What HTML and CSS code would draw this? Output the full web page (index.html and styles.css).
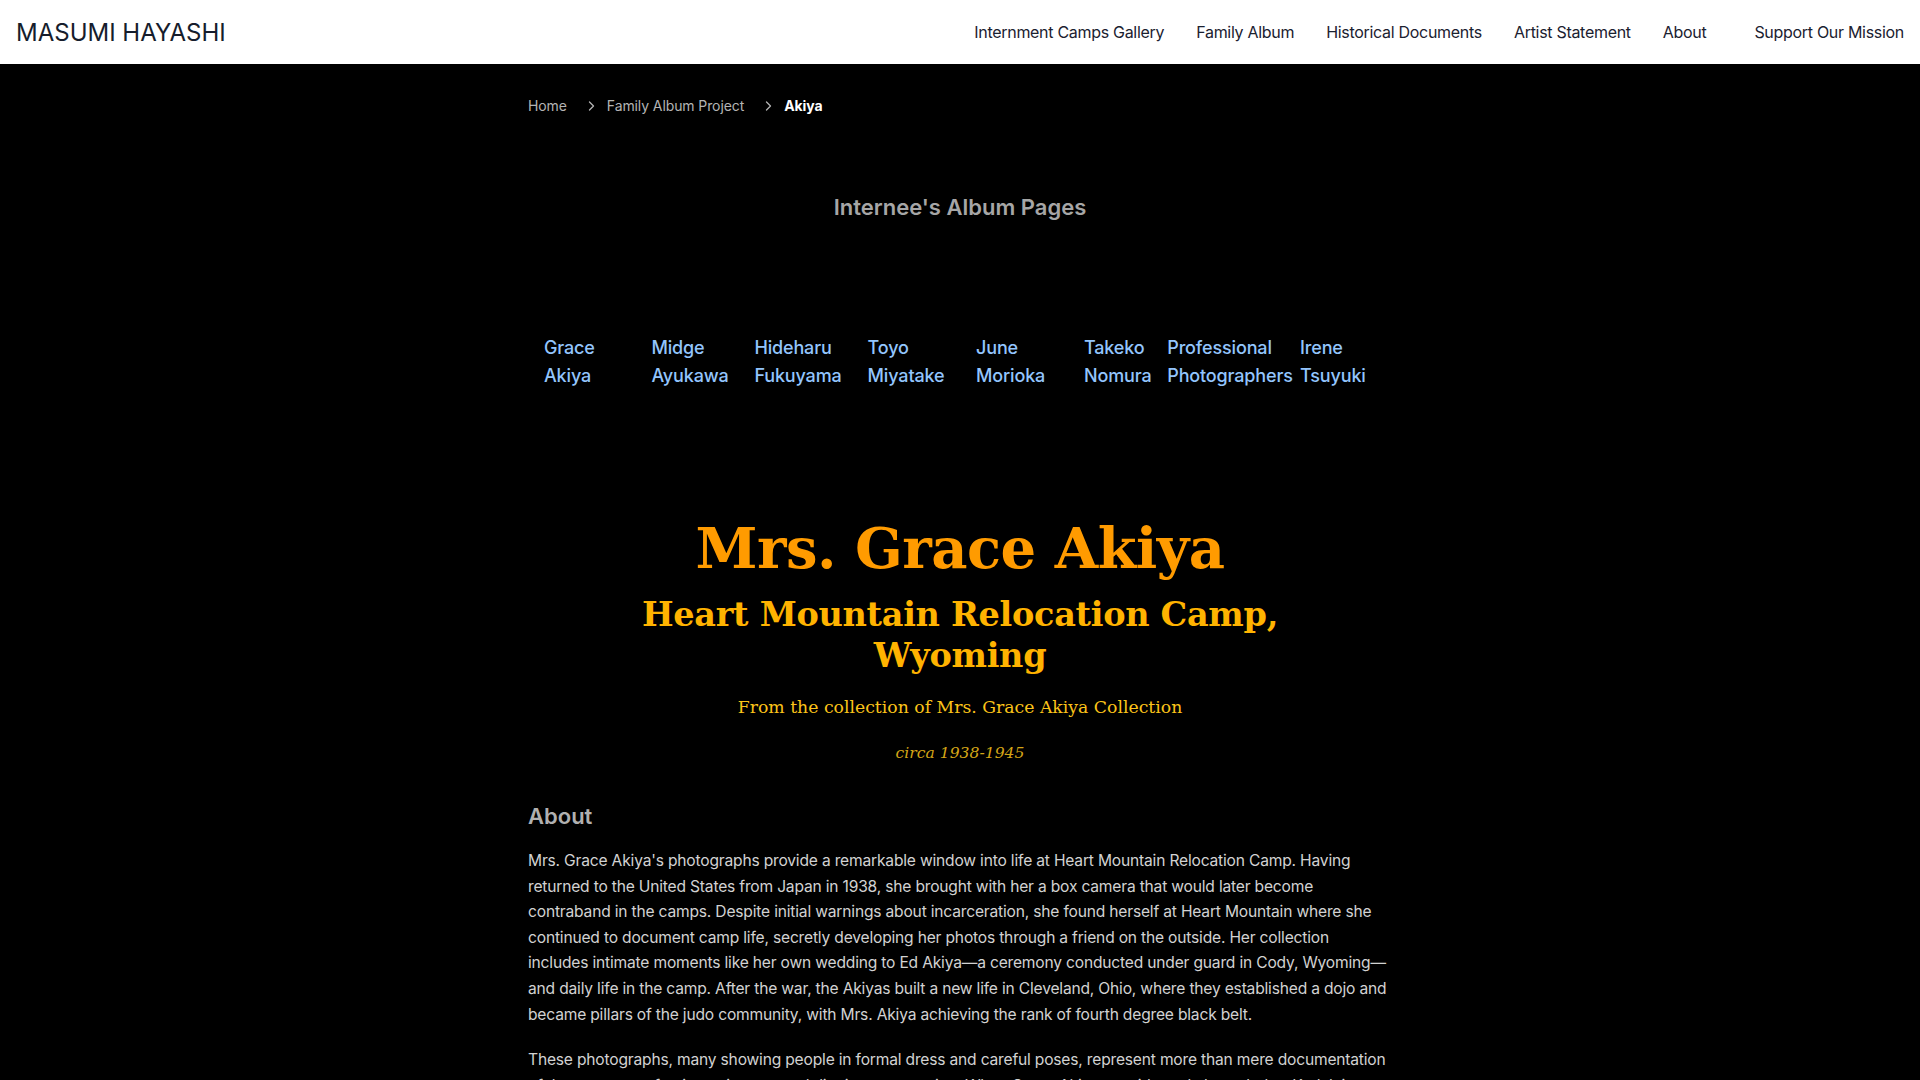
FILE: index.html
```html
<!DOCTYPE html>
<html lang="en">
<head>
<meta charset="utf-8">
<title>Akiya – Family Album Project – Masumi Hayashi</title>
<link rel="stylesheet" href="styles.css">
</head>
<body>
<header class="site-header">
  <a class="logo" href="#">MASUMI HAYASHI</a>
  <nav class="main-nav">
    <a href="#">Internment Camps Gallery</a>
    <a href="#">Family Album</a>
    <a href="#">Historical Documents</a>
    <a href="#">Artist Statement</a>
    <a href="#">About</a>
    <a href="#" class="support">Support Our Mission</a>
  </nav>
</header>

<main class="page">
  <ol class="breadcrumb">
    <li><a href="#">Home</a></li>
    <li class="sep"><svg viewBox="0 0 16 16" width="16" height="16"><path d="M6.5 4l4 4-4 4" fill="none" stroke="#b4b4b4" stroke-width="1.3" stroke-linecap="round" stroke-linejoin="round"/></svg></li>
    <li><a href="#">Family Album Project</a></li>
    <li class="sep"><svg viewBox="0 0 16 16" width="16" height="16"><path d="M6.5 4l4 4-4 4" fill="none" stroke="#b4b4b4" stroke-width="1.3" stroke-linecap="round" stroke-linejoin="round"/></svg></li>
    <li class="current">Akiya</li>
  </ol>

  <section class="album-pages">
    <h2 class="section-title">Internee's Album Pages</h2>
    <div class="names">
      <div class="cell"><a href="#">Grace Akiya</a></div>
      <div class="cell"><a href="#">Midge Ayukawa</a></div>
      <div class="cell"><a href="#">Hideharu Fukuyama</a></div>
      <div class="cell"><a href="#">Toyo Miyatake</a></div>
      <div class="cell"><a href="#">June Morioka</a></div>
      <div class="cell"><a href="#">Takeko Nomura</a></div>
      <div class="cell"><a href="#">Professional Photographers</a></div>
      <div class="cell"><a href="#">Irene Tsuyuki</a></div>
    </div>
  </section>

  <section class="hero">
    <h1 class="hero-name">Mrs. Grace Akiya</h1>
    <h2 class="hero-camp">Heart Mountain Relocation Camp, Wyoming</h2>
    <p class="hero-collection">From the collection of Mrs. Grace Akiya Collection</p>
    <p class="hero-date">circa 1938-1945</p>
  </section>

  <section class="about">
    <h3 class="about-title">About</h3>
    <p>Mrs. Grace Akiya's photographs provide a remarkable window into life at Heart Mountain Relocation Camp. Having returned to the United States from Japan in 1938, she brought with her a box camera that would later become contraband in the camps. Despite initial warnings about incarceration, she found herself at Heart Mountain where she continued to document camp life, secretly developing her photos through a friend on the outside. Her collection includes intimate moments like her own wedding to Ed Akiya—a ceremony conducted under guard in Cody, Wyoming—and daily life in the camp. After the war, the Akiyas built a new life in Cleveland, Ohio, where they established a dojo and became pillars of the judo community, with Mrs. Akiya achieving the rank of fourth degree black belt.</p>
    <p>These photographs, many showing people in formal dress and careful poses, represent more than mere documentation of the moments of quiet resistance and dignity preservation. When Grace Akiya considerately brought her Kodak into the camp, she preserved a record of community life that would otherwise have been lost.</p>
  </section>
</main>
</body>
</html>
```

FILE: styles.css
```css
* { box-sizing: border-box; }
html, body { margin: 0; padding: 0; }
body {
  background: #000;
  font-family: Inter, "Noto Sans", "Liberation Sans", sans-serif;
  color: #d4d4d4;
}
a { text-decoration: none; color: inherit; }

.site-header {
  height: 64px;
  background: #fff;
  display: flex;
  align-items: center;
  justify-content: space-between;
  padding: 0 16px;
}
.logo {
  font-size: 24px;
  color: #161d2c;
  letter-spacing: 0;
}
.main-nav {
  display: flex;
  align-items: center;
  gap: 32px;
}
.main-nav a {
  font-size: 16px;
  color: #1b2130;
  letter-spacing: -0.3px;
}
.main-nav .support { margin-left: 16px; }

.page {
  max-width: 896px;
  margin: 0 auto;
  padding: 32px 16px 40px;
}

.breadcrumb {
  list-style: none;
  margin: 0;
  padding: 0;
  display: flex;
  align-items: center;
  font-size: 14px;
  line-height: 20px;
  color: #b4b4b4;
  letter-spacing: -0.1px;
}
.breadcrumb .sep {
  display: flex;
  margin: 0 8px 0 16px;
}
.breadcrumb .current { color: #fff; font-weight: 700; }

.album-pages { margin-top: 77px; }
.section-title {
  margin: 0;
  text-align: center;
  font-size: 22px;
  line-height: 28px;
  font-weight: 600;
  color: #a6a6a6;
}
.names {
  margin-top: 113px;
  display: grid;
  grid-template-columns: repeat(8, minmax(0, 1fr));
}
.cell {
  display: flex;
  justify-content: center;
  padding: 0 16px;
}
.cell a {
  font-size: 18px;
  line-height: 28px;
  font-weight: 500;
  color: #93c5fd;
  letter-spacing: -0.15px;
}

.hero {
  text-align: center;
  margin-top: 130px;
  font-family: "DejaVu Serif", Georgia, serif;
}
.hero-name {
  margin: 0;
  font-size: 56px;
  line-height: 57px;
  font-weight: 700;
  color: #ff9b00;
  letter-spacing: -0.5px;
}
.hero-camp {
  margin: 17px auto 0;
  max-width: 672px;
  font-size: 33.5px;
  line-height: 41px;
  font-weight: 700;
  color: #ffb300;
  letter-spacing: -0.3px;
}
.hero-collection {
  margin: 17px 0 0;
  font-size: 17.25px;
  line-height: 28px;
  color: #fcc419;
}
.hero-date {
  margin: 20px 0 0;
  font-size: 15.6px;
  line-height: 24px;
  font-style: italic;
  color: #d4a517;
}

.about { margin-top: 35px; }
.about-title {
  margin: 0 0 16px;
  font-size: 22px;
  line-height: 32px;
  font-weight: 600;
  color: #b0b0b0;
}
.about p {
  margin: 0 0 20px;
  font-size: 15.6px;
  line-height: 25.6px;
  color: #d2d2d2;
  letter-spacing: -0.19px;
}
```
